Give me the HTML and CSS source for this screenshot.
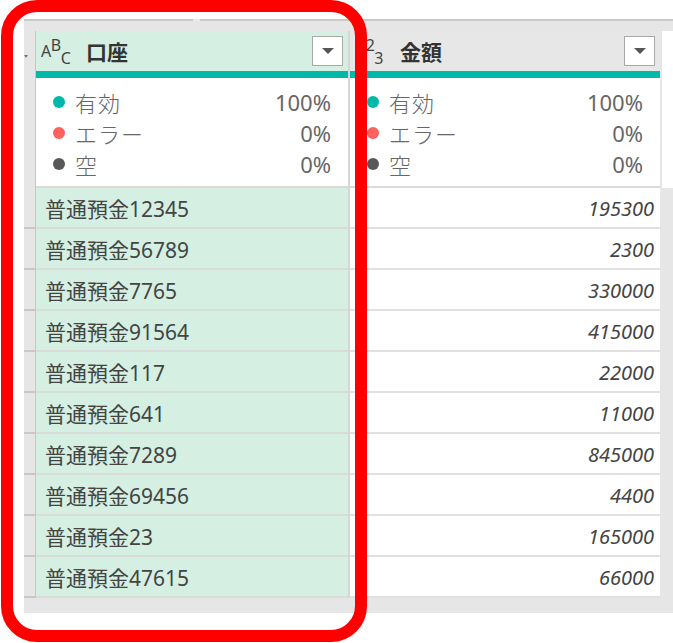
FILE: index.html
```html
<!DOCTYPE html>
<html lang="ja">
<head>
<meta charset="utf-8">
<title>口座 / 金額</title>
<link rel="stylesheet" href="styles.css">
</head>
<body>
<div class="panel">
  <div class="topbar"></div>
  <div class="table">
    <div class="strip">
      <div class="strip-head"><span class="prev-arrow"></span></div>
      <div class="strip-teal"></div>
      <div class="strip-stats"></div>
      <div class="strip-cell"></div><div class="strip-cell"></div><div class="strip-cell"></div><div class="strip-cell"></div><div class="strip-cell"></div>
      <div class="strip-cell"></div><div class="strip-cell"></div><div class="strip-cell"></div><div class="strip-cell"></div><div class="strip-cell"></div>
    </div>

    <div class="col col-sel">
      <div class="head">
        <span class="type-icon"><span>A</span><span class="sup">B</span><span class="sub">C</span></span>
        <span class="title">口座</span>
        <span class="dd"><span class="tri"></span></span>
      </div>
      <div class="teal"></div>
      <div class="stats">
        <div class="stat"><span class="dot valid"></span><span class="lbl">有効</span><span class="pct">100%</span></div>
        <div class="stat"><span class="dot error"></span><span class="lbl">エラー</span><span class="pct">0%</span></div>
        <div class="stat"><span class="dot empty"></span><span class="lbl">空</span><span class="pct">0%</span></div>
      </div>
      <div class="cell">普通預金12345</div>
      <div class="cell">普通預金56789</div>
      <div class="cell">普通預金7765</div>
      <div class="cell">普通預金91564</div>
      <div class="cell">普通預金117</div>
      <div class="cell">普通預金641</div>
      <div class="cell">普通預金7289</div>
      <div class="cell">普通預金69456</div>
      <div class="cell">普通預金23</div>
      <div class="cell">普通預金47615</div>
    </div>

    <div class="col col-num">
      <div class="head">
        <span class="type-icon"><span>1</span><span class="sup">2</span><span class="sub">3</span></span>
        <span class="title">金額</span>
        <span class="dd"><span class="tri"></span></span>
      </div>
      <div class="teal"></div>
      <div class="stats">
        <div class="stat"><span class="dot valid"></span><span class="lbl">有効</span><span class="pct">100%</span></div>
        <div class="stat"><span class="dot error"></span><span class="lbl">エラー</span><span class="pct">0%</span></div>
        <div class="stat"><span class="dot empty"></span><span class="lbl">空</span><span class="pct">0%</span></div>
      </div>
      <div class="cell">195300</div>
      <div class="cell">2300</div>
      <div class="cell">330000</div>
      <div class="cell">415000</div>
      <div class="cell">22000</div>
      <div class="cell">11000</div>
      <div class="cell">845000</div>
      <div class="cell">4400</div>
      <div class="cell">165000</div>
      <div class="cell">66000</div>
    </div>

    <div class="filler"><div class="filler-top"></div></div>
  </div>
</div>
<div class="highlight"></div>
</body>
</html>
```

FILE: styles.css
```css
html, body {
  margin: 0;
  padding: 0;
  background: #ffffff;
}

body {
  width: 673px;
  height: 643px;
  position: relative;
  overflow: hidden;
  font-family: "Noto Sans", "Noto Sans CJK JP", sans-serif;
}

.panel {
  margin-left: 24px;
  margin-top: 19px;
  width: 649px;
  height: 594px;
  background: #e6e6e6;
}

.topbar {
  position: relative;
  height: 12px;
  box-sizing: border-box;
  border-top: 2px solid #c9c9c9;
}

.topbar::after {
  content: "";
  position: absolute;
  left: 169px;
  top: -2px;
  width: 7px;
  height: 2px;
  background: #e9e9e9;
}

.table {
  display: flex;
  align-items: flex-start;
}

/* left row-number strip */
.strip {
  width: 12px;
  box-sizing: border-box;
  border-right: 1px solid #c6c6c6;
  background: #e6e6e6;
}

.strip-head {
  height: 40px;
  box-sizing: border-box;
  padding-top: 24px;
}

.prev-arrow {
  display: block;
  width: 0;
  height: 0;
  border-left: 2px solid transparent;
  border-right: 2px solid transparent;
  border-top: 3px solid #777;
}

.strip-teal {
  height: 7px;
}

.strip-stats {
  height: 110px;
}

.strip-cell {
  height: 39px;
  border-bottom: 2px solid #c8c8c8;
}

/* columns */
.col {
  box-sizing: border-box;
}

.col-sel {
  width: 314px;
  border-right: 2px solid #d6d6d6;
}

.col-num {
  width: 312px;
  border-right: 2px solid #e6e6e6;
}

.head {
  height: 40px;
  display: flex;
  align-items: center;
  padding-left: 5px;
  padding-right: 5px;
  box-sizing: border-box;
}

.col-sel .head {
  background: #d5efe2;
}

.col-num .head {
  background: #e7e7e7;
}

.type-icon {
  font-family: "Noto Sans", sans-serif;
  font-size: 16px;
  color: #444;
  line-height: 16px;
  white-space: nowrap;
  width: 31px;
  padding-top: 1px;
  letter-spacing: -0.5px;
}

.type-icon .sup {
  vertical-align: 6px;
}

.type-icon .sub {
  vertical-align: -7px;
}

.col-num .type-icon {
  width: 29px;
  padding-left: 2px;
}

.title {
  font-family: "Noto Sans CJK JP", sans-serif;
  font-weight: bold;
  font-size: 21px;
  color: #333;
  margin-left: 14px;
}

.dd {
  margin-left: auto;
  width: 31px;
  height: 30px;
  box-sizing: border-box;
  background: #ffffff;
  border: 1px solid #a9a9a9;
  display: flex;
  align-items: center;
  justify-content: center;
}

.tri {
  width: 0;
  height: 0;
  border-left: 6px solid transparent;
  border-right: 6px solid transparent;
  border-top: 6px solid #555;
}

.teal {
  height: 7px;
  background: #01b8aa;
}

.stats {
  height: 110px;
  box-sizing: border-box;
  background: #ffffff;
  border-bottom: 2px solid #dadada;
  padding: 8px 17px 0 17px;
}

.stat {
  height: 31px;
  display: flex;
  align-items: center;
  font-size: 22px;
  color: #666;
}

.dot {
  width: 12px;
  height: 12px;
  border-radius: 50%;
  flex: none;
}

.dot.valid { background: #01b8aa; }
.dot.error { background: #fd625e; }
.dot.empty { background: #585858; }

.lbl {
  margin-left: 10px;
  font-family: "Noto Sans CJK JP", sans-serif;
  font-weight: 300;
  letter-spacing: 1px;
}

.pct {
  margin-left: auto;
}

.cell {
  height: 39px;
  line-height: 42px;
  overflow: hidden;
  border-bottom: 2px solid #d9dcda;
  font-size: 21px;
  color: #444;
  white-space: nowrap;
}

.col-sel .cell {
  background: #d5efe2;
  padding-left: 9px;
}

.col-num .cell {
  background: #ffffff;
  border-bottom-color: #e1e1e1;
  text-align: right;
  padding-right: 6px;
  font-style: italic;
  font-size: 20px;
}

.filler {
  flex: 1;
}

.filler-top {
  height: 157px;
  background: #ffffff;
}

/* red annotation frame overlaying the grid */
.highlight {
  position: absolute;
  left: 1px;
  top: 0;
  width: 366px;
  height: 642px;
  box-sizing: border-box;
  border: 12px solid #ff0000;
  border-radius: 36px;
  pointer-events: none;
}
```
